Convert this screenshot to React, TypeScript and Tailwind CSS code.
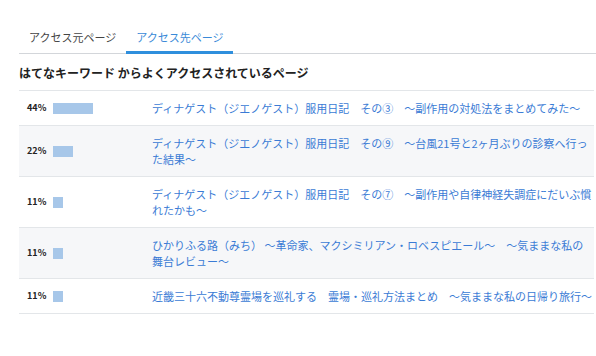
const rows = [
  {
    pct: 44,
    title:
      "ディナゲスト（ジエノゲスト）服用日記　その③　～副作用の対処法をまとめてみた～",
  },
  {
    pct: 22,
    title:
      "ディナゲスト（ジエノゲスト）服用日記　その⑨　～台風21号と2ヶ月ぶりの診察へ行った結果～",
  },
  {
    pct: 11,
    title:
      "ディナゲスト（ジエノゲスト）服用日記　その⑦　～副作用や自律神経失調症にだいぶ慣れたかも～",
  },
  {
    pct: 11,
    title:
      "ひかりふる路（みち） ～革命家、マクシミリアン・ロベスピエール～　～気ままな私の舞台レビュー～",
  },
  {
    pct: 11,
    title: "近畿三十六不動尊霊場を巡礼する　霊場・巡礼方法まとめ　～気ままな私の日帰り旅行～",
  },
];

const App = () => {
  return (
    <div
      className="w-[596px] h-[356px] bg-white pl-[19px] pr-[2px] pt-[28px]"
      style={{ fontFamily: '"Noto Sans CJK JP", "Noto Sans", sans-serif' }}
    >
      {/* Tabs */}
      <div className="flex border-b border-[#d3d6da] -mr-[2px]">
        <div className="px-[10px] pb-[5px] text-[11px] leading-[18px] text-[#444]">
          アクセス元ページ
        </div>
        <div className="px-[10px] pb-[5px] text-[11px] leading-[18px] text-[#3a8ad8] border-b-[3px] border-[#2f8fdd] -mb-px">
          アクセス先ページ
        </div>
      </div>

      <h2 className="mt-[10px] mb-[8px] text-[12px] leading-[18px] font-bold text-[#222]">
        はてなキーワード からよくアクセスされているページ
      </h2>

      <div className="border-t border-[#e3e6e9]">
        {rows.map((row, i) => (
          <div
            key={i}
            className={`flex items-center border-b border-[#e3e6e9] py-[9px] ${
              i % 2 === 1 ? "bg-[#f6f7f9]" : "bg-white"
            }`}
          >
            <div className="w-[133px] shrink-0 flex items-center pl-[8px]">
              <span className="w-[26px] text-[9px] font-bold text-[#222]">
                {row.pct}%
              </span>
              <span
                className="h-[11px] bg-[#a7c7e9]"
                style={{ width: `${Math.round(row.pct * 0.91)}px` }}
              />
            </div>
            <a className="flex-1 text-[11px] leading-4 text-[#3a7bd5]">
              {row.title}
            </a>
          </div>
        ))}
      </div>
    </div>
  );
};

export default App;
